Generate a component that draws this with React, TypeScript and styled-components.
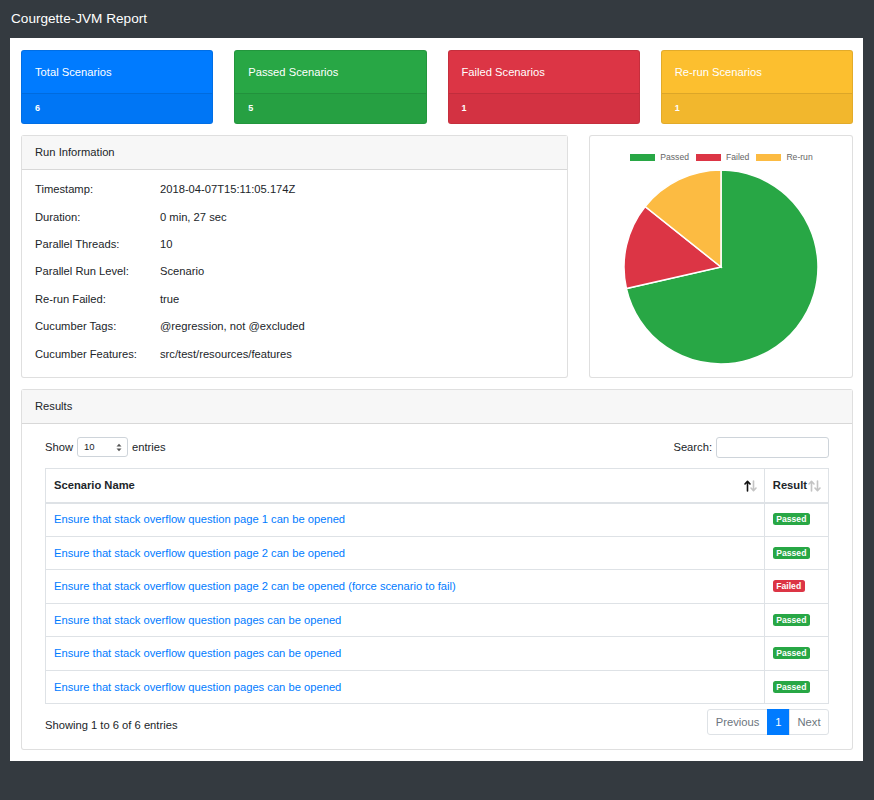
import React from 'react';
import styled, {createGlobalStyle} from "styled-components";

const GlobalStyle = createGlobalStyle`
  html, body {
    margin: 0;
    padding: 0;
    background: #343a40;
  }
  body {
    font-family: "Liberation Sans", Arial, Helvetica, sans-serif;
    font-size: 11.2px;
    line-height: 1.5;
    color: #212529;
  }
`

type Tone = 'primary' | 'success' | 'danger' | 'warning'

const toneColor: Record<Tone, string> = {
    primary: '#007bff',
    success: '#28a745',
    danger: '#dc3545',
    warning: '#fcbf2f',
}

const summary: { title: string, value: number, tone: Tone }[] = [
    {title: 'Total Scenarios', value: 6, tone: 'primary'},
    {title: 'Passed Scenarios', value: 5, tone: 'success'},
    {title: 'Failed Scenarios', value: 1, tone: 'danger'},
    {title: 'Re-run Scenarios', value: 1, tone: 'warning'},
]

const runInfo: [string, string][] = [
    ['Timestamp:', '2018-04-07T15:11:05.174Z'],
    ['Duration:', '0 min, 27 sec'],
    ['Parallel Threads:', '10'],
    ['Parallel Run Level:', 'Scenario'],
    ['Re-run Failed:', 'true'],
    ['Cucumber Tags:', '@regression, not @excluded'],
    ['Cucumber Features:', 'src/test/resources/features'],
]

const results: { name: string, passed: boolean }[] = [
    {name: 'Ensure that stack overflow question page 1 can be opened', passed: true},
    {name: 'Ensure that stack overflow question page 2 can be opened', passed: true},
    {name: 'Ensure that stack overflow question page 2 can be opened (force scenario to fail)', passed: false},
    {name: 'Ensure that stack overflow question pages can be opened', passed: true},
    {name: 'Ensure that stack overflow question pages can be opened', passed: true},
    {name: 'Ensure that stack overflow question pages can be opened', passed: true},
]

const pieData = [
    {label: 'Passed', value: 5, color: '#28a745'},
    {label: 'Failed', value: 1, color: '#dc3545'},
    {label: 'Re-run', value: 1, color: '#fcbb42'},
]

const PieChart = () => {
    const cx = 131, cy = 105, r = 97
    const total = pieData.reduce((s, d) => s + d.value, 0)
    let start = 0
    const point = (a: number) => {
        const rad = a * Math.PI / 180
        return `${(cx + r * Math.sin(rad)).toFixed(2)} ${(cy - r * Math.cos(rad)).toFixed(2)}`
    }
    return (
        <svg width="262" height="210" viewBox="0 0 262 210">
            {pieData.map(d => {
                const sweep = d.value / total * 360
                const end = start + sweep
                const path = `M ${cx} ${cy} L ${point(start)} A ${r} ${r} 0 ${sweep > 180 ? 1 : 0} 1 ${point(end)} Z`
                start = end
                return <path key={d.label} d={path} fill={d.color} stroke="#fff" strokeWidth="1.5"/>
            })}
        </svg>
    )
}

// datatables style sort arrows
const SortArrows = ({up}: { up?: boolean }) => (
    <SortIcons>
        <svg width="13" height="12" viewBox="0 0 13 12">
            <g strokeWidth="1.6" fill="none" strokeLinecap="round" strokeLinejoin="round">
                <path d="M3.5 11 V1.5 M1 4 L3.5 1.3 L6 4" stroke={up ? '#111' : '#c4c4c4'}/>
                <path d="M9.5 1 V10.5 M7 8 L9.5 10.7 L12 8" stroke="#c4c4c4"/>
            </g>
        </svg>
    </SortIcons>
)

export default function App() {
    return (
        <>
            <GlobalStyle/>
            <TopBar>Courgette-JVM Report</TopBar>
            <Container>
                <SummaryRow>
                    {summary.map(s => (
                        <StatCard key={s.title} tone={s.tone}>
                            <StatHeader>{s.title}</StatHeader>
                            <StatFooter>{s.value}</StatFooter>
                        </StatCard>
                    ))}
                </SummaryRow>

                <InfoRow>
                    <Panel>
                        <PanelHeader>Run Information</PanelHeader>
                        <InfoBody>
                            {runInfo.map(([k, v]) => (
                                <InfoLine key={k}>
                                    <span>{k}</span>
                                    <span>{v}</span>
                                </InfoLine>
                            ))}
                        </InfoBody>
                    </Panel>
                    <Panel>
                        <Legend>
                            {pieData.map(d => (
                                <LegendItem key={d.label}>
                                    <LegendSwatch color={d.color}/>
                                    {d.label}
                                </LegendItem>
                            ))}
                        </Legend>
                        <ChartWrap>
                            <PieChart/>
                        </ChartWrap>
                    </Panel>
                </InfoRow>

                <Panel>
                    <PanelHeader>Results</PanelHeader>
                    <ResultsBody>
                        <Controls>
                            <ControlLabel>
                                Show
                                <SelectBox>
                                    <span>10</span>
                                    <SelectArrows>
                                        <svg width="6" height="9" viewBox="0 0 6 9">
                                            <path d="M0.5 3.5 L3 0.8 L5.5 3.5 Z" fill="#555"/>
                                            <path d="M0.5 5.5 L3 8.2 L5.5 5.5 Z" fill="#555"/>
                                        </svg>
                                    </SelectArrows>
                                </SelectBox>
                                entries
                            </ControlLabel>
                            <ControlLabel>
                                Search:
                                <SearchInput type="text"/>
                            </ControlLabel>
                        </Controls>

                        <Table>
                            <thead>
                            <tr>
                                <Th>
                                    Scenario Name
                                    <SortArrows up/>
                                </Th>
                                <Th narrow>
                                    Result
                                    <SortArrows/>
                                </Th>
                            </tr>
                            </thead>
                            <tbody>
                            {results.map((r, i) => (
                                <tr key={i}>
                                    <Td><ScenarioLink href="#">{r.name}</ScenarioLink></Td>
                                    <Td>
                                        <Badge passed={r.passed}>{r.passed ? 'Passed' : 'Failed'}</Badge>
                                    </Td>
                                </tr>
                            ))}
                            </tbody>
                        </Table>

                        <Footer>
                            <Info>Showing 1 to 6 of 6 entries</Info>
                            <Pager>
                                <PageBtn>Previous</PageBtn>
                                <PageBtn active>1</PageBtn>
                                <PageBtn>Next</PageBtn>
                            </Pager>
                        </Footer>
                    </ResultsBody>
                </Panel>
            </Container>
            <BottomSpace/>
        </>
    );
}

const TopBar = styled.div`
  height: 38px;
  display: flex;
  align-items: center;
  padding-left: 11px;
  color: #fff;
  font-size: 13.6px;
`

const Container = styled.div`
  margin: 0 11px 0 10px;
  background: #fff;
  padding: 12px 10px 11px 11px;
  display: flex;
  flex-direction: column;
  gap: 11px;
`

const BottomSpace = styled.div`
  height: 39px;
`

const SummaryRow = styled.div`
  display: grid;
  grid-template-columns: repeat(4, 1fr);
  gap: 21px;
`

const StatCard = styled.div<{ tone: Tone }>`
  background: ${p => toneColor[p.tone]};
  border: 1px solid rgba(0, 0, 0, .1);
  border-radius: 3px;
  color: #fff;
  overflow: hidden;
`

const StatHeader = styled.div`
  height: 42px;
  display: flex;
  align-items: center;
  padding: 0 13px;
  font-size: 11.2px;
`

const StatFooter = styled.div`
  height: 30px;
  display: flex;
  align-items: center;
  padding: 0 13px;
  font-size: 9px;
  font-weight: bold;
  background: rgba(0, 0, 0, .04);
  border-top: 1px solid rgba(0, 0, 0, .09);
  box-sizing: border-box;
`

const InfoRow = styled.div`
  display: grid;
  grid-template-columns: minmax(0, 547fr) minmax(0, 264fr);
  gap: 21px;
`

const Panel = styled.div`
  border: 1px solid rgba(0, 0, 0, .125);
  border-radius: 3px;
  background: #fff;
`

const PanelHeader = styled.div`
  height: 33px;
  display: flex;
  align-items: center;
  padding: 0 13px;
  background: #f7f7f7;
  border-bottom: 1px solid rgba(0, 0, 0, .125);
  font-size: 11.2px;
`

const InfoBody = styled.div`
  padding: 6px 13px 9px;
`

const InfoLine = styled.div`
  display: grid;
  grid-template-columns: 125px 1fr;
  height: 27.4px;
  align-items: center;
`

const Legend = styled.div`
  display: flex;
  justify-content: center;
  gap: 6px;
  padding-top: 16px;
  font-size: 8.6px;
  color: #666;
  line-height: 10px;
`

const LegendItem = styled.div`
  display: flex;
  align-items: center;
  gap: 4px;
`

const LegendSwatch = styled.span<{ color: string }>`
  width: 27px;
  height: 9px;
  background: ${p => p.color};
  border: 1px solid #fff;
  box-sizing: border-box;
`

const ChartWrap = styled.div`
  display: flex;
  justify-content: center;
`

const ResultsBody = styled.div`
  padding: 13px 23px 14px;
`

const Controls = styled.div`
  display: flex;
  justify-content: space-between;
  align-items: center;
  margin-bottom: 10px;
`

const ControlLabel = styled.label`
  display: flex;
  align-items: center;
  gap: 4px;
`

const SelectBox = styled.div`
  width: 51px;
  height: 20px;
  box-sizing: border-box;
  border: 1px solid #ced4da;
  border-radius: 3px;
  display: flex;
  align-items: center;
  justify-content: space-between;
  padding: 0 5px 0 6px;
  font-size: 9.5px;
`

const SelectArrows = styled.span`
  display: flex;
`

const SearchInput = styled.input`
  width: 113px;
  height: 21px;
  box-sizing: border-box;
  border: 1px solid #ced4da;
  border-radius: 3px;
  outline: none;
`

const Table = styled.table`
  width: 100%;
  border-collapse: collapse;
  border: 1px solid #dee2e6;
`

const Th = styled.th<{ narrow?: boolean }>`
  position: relative;
  text-align: left;
  height: 33px;
  padding: 0 ${p => p.narrow ? '21px' : '24px'} 0 8px;
  border: 1px solid #dee2e6;
  border-bottom: 2px solid #dee2e6;
  font-size: 11.2px;
  width: ${p => p.narrow ? '34px' : 'auto'};
  white-space: nowrap;
`

const SortIcons = styled.span`
  position: absolute;
  right: 7px;
  top: 11px;
  display: flex;
`

const Td = styled.td`
  height: 33.5px;
  padding: 0 8px;
  border: 1px solid #dee2e6;
  box-sizing: border-box;
`

const ScenarioLink = styled.a`
  color: #007bff;
  text-decoration: none;
  font-size: 11.2px;
`

const Badge = styled.span<{ passed: boolean }>`
  display: inline-block;
  padding: 1px 3.5px;
  border-radius: 2.5px;
  background: ${p => p.passed ? '#28a745' : '#dc3545'};
  color: #fff;
  font-size: 8.6px;
  font-weight: bold;
  line-height: 10px;
  vertical-align: 1px;
`

const Footer = styled.div`
  display: flex;
  justify-content: space-between;
  align-items: center;
  margin-top: 5px;
`

const Info = styled.span`
  padding-top: 6px;
`

const Pager = styled.div`
  display: flex;
`

const PageBtn = styled.span<{ active?: boolean }>`
  height: 26px;
  box-sizing: border-box;
  display: flex;
  align-items: center;
  padding: 0 7.5px;
  border: 1px solid ${p => p.active ? '#007bff' : '#dee2e6'};
  margin-left: -1px;
  background: ${p => p.active ? '#007bff' : '#fff'};
  color: ${p => p.active ? '#fff' : '#6c757d'};

  &:first-child {
    margin-left: 0;
    border-radius: 3px 0 0 3px;
  }

  &:last-child {
    border-radius: 0 3px 3px 0;
  }
`
